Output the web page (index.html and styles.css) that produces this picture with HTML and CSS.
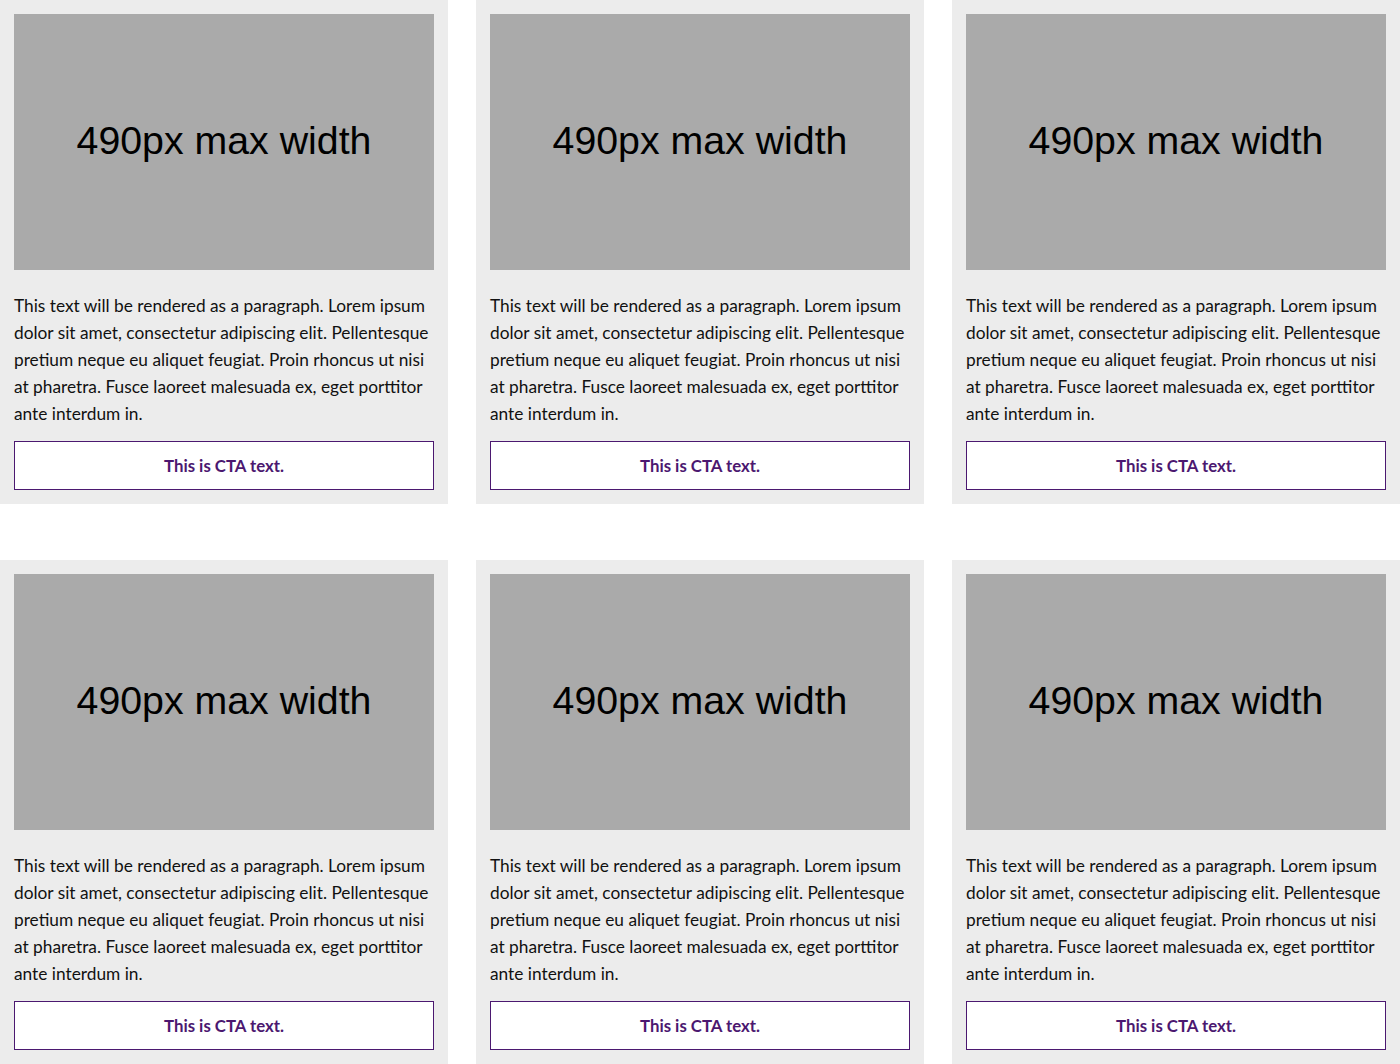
FILE: index.html
```html
<!DOCTYPE html>
<html lang="en">
<head>
<meta charset="utf-8">
<title>Cards</title>
<link rel="stylesheet" href="styles.css">
</head>
<body>
<div class="grid">
  <div class="card">
    <div class="img"><span>490px max width</span></div>
    <p class="text">This text will be rendered as a paragraph. Lorem ipsum dolor sit amet, consectetur adipiscing elit. Pellentesque pretium neque eu aliquet feugiat. Proin rhoncus ut nisi at pharetra. Fusce laoreet malesuada ex, eget porttitor ante interdum in.</p>
    <a class="cta" href="#">This is CTA text.</a>
  </div>
  <div class="card">
    <div class="img"><span>490px max width</span></div>
    <p class="text">This text will be rendered as a paragraph. Lorem ipsum dolor sit amet, consectetur adipiscing elit. Pellentesque pretium neque eu aliquet feugiat. Proin rhoncus ut nisi at pharetra. Fusce laoreet malesuada ex, eget porttitor ante interdum in.</p>
    <a class="cta" href="#">This is CTA text.</a>
  </div>
  <div class="card">
    <div class="img"><span>490px max width</span></div>
    <p class="text">This text will be rendered as a paragraph. Lorem ipsum dolor sit amet, consectetur adipiscing elit. Pellentesque pretium neque eu aliquet feugiat. Proin rhoncus ut nisi at pharetra. Fusce laoreet malesuada ex, eget porttitor ante interdum in.</p>
    <a class="cta" href="#">This is CTA text.</a>
  </div>
  <div class="card">
    <div class="img"><span>490px max width</span></div>
    <p class="text">This text will be rendered as a paragraph. Lorem ipsum dolor sit amet, consectetur adipiscing elit. Pellentesque pretium neque eu aliquet feugiat. Proin rhoncus ut nisi at pharetra. Fusce laoreet malesuada ex, eget porttitor ante interdum in.</p>
    <a class="cta" href="#">This is CTA text.</a>
  </div>
  <div class="card">
    <div class="img"><span>490px max width</span></div>
    <p class="text">This text will be rendered as a paragraph. Lorem ipsum dolor sit amet, consectetur adipiscing elit. Pellentesque pretium neque eu aliquet feugiat. Proin rhoncus ut nisi at pharetra. Fusce laoreet malesuada ex, eget porttitor ante interdum in.</p>
    <a class="cta" href="#">This is CTA text.</a>
  </div>
  <div class="card">
    <div class="img"><span>490px max width</span></div>
    <p class="text">This text will be rendered as a paragraph. Lorem ipsum dolor sit amet, consectetur adipiscing elit. Pellentesque pretium neque eu aliquet feugiat. Proin rhoncus ut nisi at pharetra. Fusce laoreet malesuada ex, eget porttitor ante interdum in.</p>
    <a class="cta" href="#">This is CTA text.</a>
  </div>
</div>
</body>
</html>
```
FILE: styles.css
```css
html, body {
  margin: 0;
  padding: 0;
  background: #ffffff;
}
.grid {
  display: grid;
  grid-template-columns: repeat(3, 448px);
  column-gap: 28px;
  row-gap: 56px;
}
.card {
  background: #ececec;
  padding: 14px;
  display: flex;
  flex-direction: column;
}
.img {
  height: 256px;
  background: #aaaaaa;
  display: flex;
  align-items: center;
  justify-content: center;
  padding-bottom: 4px;
  box-sizing: border-box;
}
.img span {
  font-family: "Liberation Sans", Arial, sans-serif;
  font-size: 39.3px;
  color: #000000;
}
.text {
  margin: 22px 0 14px;
  font-family: Lato, "Noto Sans", sans-serif;
  font-size: 17.3px;
  line-height: 27px;
  color: #111111;
}
.cta {
  display: flex;
  align-items: center;
  justify-content: center;
  height: 47px;
  border: 1px solid #4b1870;
  background: #ffffff;
  color: #4b1870;
  font-family: Lato, "Noto Sans", sans-serif;
  font-weight: 700;
  font-size: 16.8px;
  text-decoration: none;
}
```
